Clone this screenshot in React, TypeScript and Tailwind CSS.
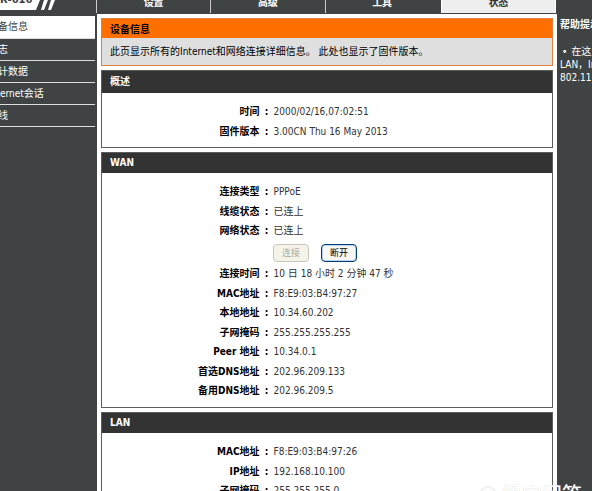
import React from 'react';

type Row = { label: string; value: string };

const tabs = ['设置', '高级', '工具', '状态'];

const menu = ['设备信息', '日志', '统计数据', 'Internet会话', '无线'];

const overview: Row[] = [
  { label: '时间', value: '2000/02/16,07:02:51' },
  { label: '固件版本', value: '3.00CN Thu 16 May 2013' },
];

const wanStatus: Row[] = [
  { label: '连接类型', value: 'PPPoE' },
  { label: '线缆状态', value: '已连上' },
  { label: '网络状态', value: '已连上' },
];

const wanAddress: Row[] = [
  { label: '连接时间', value: '10 日 18 小时 2 分钟 47 秒' },
  { label: 'MAC地址', value: 'F8:E9:03:B4:97:27' },
  { label: '本地地址', value: '10.34.60.202' },
  { label: '子网掩码', value: '255.255.255.255' },
  { label: 'Peer 地址', value: '10.34.0.1' },
  { label: '首选DNS地址', value: '202.96.209.133' },
  { label: '备用DNS地址', value: '202.96.209.5' },
];

const lan: Row[] = [
  { label: 'MAC地址', value: 'F8:E9:03:B4:97:26' },
  { label: 'IP地址', value: '192.168.10.100' },
  { label: '子网掩码', value: '255.255.255.0' },
];

function Rows({ rows }: { rows: Row[] }) {
  return (
    <dl>
      {rows.map((row) => (
        <div key={row.label} className="flex h-5 items-center whitespace-nowrap even:h-[19px]">
          <dt className="w-[35%] text-right font-bold text-black">{row.label}</dt>
          <span className="w-3.5 text-center font-bold text-black">:</span>
          <dd>{row.value}</dd>
        </div>
      ))}
    </dl>
  );
}

function Panel({ title, tall, children }: { title: string; tall?: boolean; children: React.ReactNode }) {
  return (
    <section className="border border-[#5c5c5c] bg-white">
      <h2
        className={`flex items-center bg-[#333] px-2 font-bold text-white ${tall ? 'h-[22px]' : 'h-5'}`}
      >
        {title}
      </h2>
      <div className="pt-[9px] pb-1.5">{children}</div>
    </section>
  );
}

export default function App() {
  return (
    <div className="relative h-screen overflow-hidden bg-white font-['DejaVu_Sans_Condensed','Noto_Sans_CJK_SC',sans-serif] text-[10px] leading-4 text-[#333]">
      <header className="flex h-[14px] items-end overflow-hidden bg-[#404343] text-white">
        <div className="relative h-full w-24 shrink-0">
          <svg className="absolute inset-0 h-full w-full" viewBox="0 0 96 14">
            <path d="M0 0H40L36 10H0Z" fill="#fff" />
            <path d="M44 0H48L44 10H41ZM51 0H55L51 10H48Z" fill="#fff" />
          </svg>
          <span className="absolute bottom-1.5 -left-3 text-[11px] font-bold text-[#404343]">DIR-616</span>
        </div>
        <nav className="flex h-full flex-1 items-end pb-px">
          {tabs.map((tab) => (
            <a
              key={tab}
              href="#"
              className={`flex h-full flex-1 items-end justify-center border-l pb-0.5 font-bold ${
                tab === '状态' ? 'ml-0.5 border-r border-white bg-[#eee] text-[#333]' : 'border-[#ccc]'
              }`}
            >
              {tab}
            </a>
          ))}
        </nav>
        <div className="h-full w-[36px] shrink-0" />
      </header>

      <div className="flex h-full items-stretch">
        <aside className="w-[97px] shrink-0 overflow-hidden bg-[#404343] pt-0.5 pr-0.5">
          {menu.map((item, i) => (
            <a
              key={item}
              href="#"
              className={`-ml-3 flex items-center border-b border-[#ddd] whitespace-nowrap ${
                i === 0 ? 'h-[23px] bg-white text-[#404343]' : 'h-[22px] text-white'
              }`}
            >
              {item}
            </a>
          ))}
        </aside>

        <main className="flex min-w-0 flex-1 flex-col gap-1 p-1">
          <section className="border border-[#e08040] bg-[#dfdfdf] text-black">
            <h1 className="flex h-[19px] items-center bg-[#ff6f00] px-2 pt-0.5 font-bold">设备信息</h1>
            <p className="px-2 pt-1.5 pb-[5px]">此页显示所有的Internet和网络连接详细信息。 此处也显示了固件版本。</p>
          </section>

          <Panel title="概述" tall>
            <Rows rows={overview} />
          </Panel>

          <Panel title="WAN">
            <Rows rows={wanStatus} />
            <div className="flex gap-3 pt-[3px] pb-0.5 pl-[38%]">
              <button
                disabled
                className="flex h-[18px] w-9 items-center justify-center rounded-sm border border-[#c9c7ba] bg-[#f5f4ea] text-[9px] text-[#aca899]"
              >
                连接
              </button>
              <button className="flex h-[18px] w-9 items-center justify-center rounded-sm border border-[#003c74] bg-[#f7f7f4] text-[9px] text-black inset-shadow-[0_0_0_1px_#bcd4f0]">
                断开
              </button>
            </div>
            <Rows rows={wanAddress} />
          </Panel>

          <Panel title="LAN">
            <Rows rows={lan} />
          </Panel>
        </main>

        <aside className="w-[35px] shrink-0 overflow-hidden bg-[#404343] pt-[3px] pl-[3px] whitespace-nowrap text-white">
          <h2 className="font-bold">帮助提示</h2>
          <p className="mt-3 leading-[13px]">
            <span className="pr-1 pl-0.5">•</span>
            在这里所有的
            <br />
            LAN，Internet
            <br />
            802.11 N
          </p>
        </aside>
      </div>

      {/* site watermark, hangs over the bottom edge */}
      <div className="absolute right-2.5 -bottom-4 flex items-center gap-1 text-xl leading-6 text-white text-shadow-[0_0_1px_#ccc]">
        <svg className="h-5 w-5" viewBox="0 0 20 20" fill="none" stroke="#f0f0f0" strokeWidth="2">
          <circle cx="10" cy="10" r="8" />
          <circle cx="10" cy="10" r="3" />
        </svg>
        悟空问答
      </div>
    </div>
  );
}
